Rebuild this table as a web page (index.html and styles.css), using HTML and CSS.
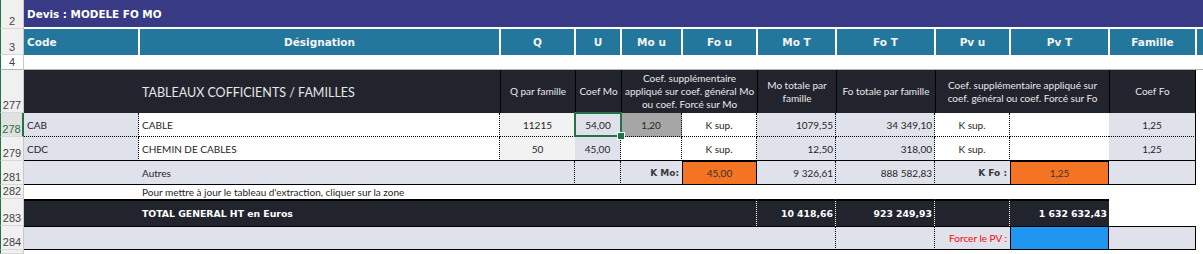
FILE: index.html
```html
<!DOCTYPE html>
<html lang="fr">
<head>
<meta charset="utf-8">
<title>Devis : MODELE FO MO</title>
<link rel="stylesheet" href="styles.css">
</head>
<body>
<div class="sheet">
  <!-- row 2 -->
  <div class="rh">2</div>
  <div class="title s12">Devis : MODELE FO MO</div>

  <!-- row 3 -->
  <div class="rh">3</div>
  <div class="th first left">Code</div>
  <div class="th">Désignation</div>
  <div class="th">Q</div>
  <div class="th">U</div>
  <div class="th">Mo u</div>
  <div class="th">Fo u</div>
  <div class="th">Mo T</div>
  <div class="th">Fo T</div>
  <div class="th">Pv u</div>
  <div class="th">Pv T</div>
  <div class="th">Famille</div>
  <div class="th last"></div>

  <!-- row 4 -->
  <div class="rh r4">4</div>
  <div class="c r4 s12"></div>

  <!-- row 277 -->
  <div class="rh">277</div>
  <div class="c dk"></div>
  <div class="c dk big">TABLEAUX COFFICIENTS / FAMILLES</div>
  <div class="c dk hd bl">Q par famille</div>
  <div class="c dk hd bl">Coef Mo</div>
  <div class="c dk hd bl s2">Coef. supplémentaire<br>appliqué sur coef. général Mo<br>ou coef. Forcé sur Mo</div>
  <div class="c dk hd bl">Mo totale par<br>famille</div>
  <div class="c dk hd bl">Fo totale par famille</div>
  <div class="c dk hd bl s2">Coef. supplémentaire appliqué sur<br>coef. général ou coef. Forcé sur Fo</div>
  <div class="c dk hd bl sr">Coef Fo</div>
  <div class="c"></div>

  <!-- row 278 -->
  <div class="rh sel">278</div>
  <div class="c lt dr db">CAB</div>
  <div class="c dr db">CABLE</div>
  <div class="c gr db ctr">11215</div>
  <div class="c lt db ctr active">54,00</div>
  <div class="c gy dr db ctr">1,20</div>
  <div class="c dr db ctr">K sup.</div>
  <div class="c lt dr db r">1079,55</div>
  <div class="c lt dr db r">34 349,10</div>
  <div class="c dr db ctr">K sup.</div>
  <div class="c db"></div>
  <div class="c lt db sr ctr">1,25</div>
  <div class="c"></div>

  <!-- row 279 -->
  <div class="rh">279</div>
  <div class="c lt dr sb">CDC</div>
  <div class="c dr sb">CHEMIN DE CABLES</div>
  <div class="c gr sb ctr">50</div>
  <div class="c lt dr sb ctr">45,00</div>
  <div class="c dr sb"></div>
  <div class="c dr sb ctr">K sup.</div>
  <div class="c lt dr sb r">12,50</div>
  <div class="c lt dr sb r">318,00</div>
  <div class="c dr sb ctr">K sup.</div>
  <div class="c sb"></div>
  <div class="c lt sb sr ctr">1,25</div>
  <div class="c"></div>

  <!-- row 281 -->
  <div class="rh">281</div>
  <div class="c lt sb"></div>
  <div class="c lt sb">Autres</div>
  <div class="c lt sb dr"></div>
  <div class="c lt sb dr"></div>
  <div class="c lt sb r b pr3">K Mo:</div>
  <div class="c box or ctr">45,00</div>
  <div class="c lt dr sb r">9 326,61</div>
  <div class="c lt dr sb r">888 582,83</div>
  <div class="c lt sb r b pr3">K Fo :</div>
  <div class="c box or ctr">1,25</div>
  <div class="c lt sb sr"></div>
  <div class="c"></div>

  <!-- row 282 -->
  <div class="rh">282</div>
  <div class="c"></div>
  <div class="c note s11">Pour mettre à jour le tableau d'extraction, cliquer sur la zone</div>

  <!-- row 283 -->
  <div class="rh">283</div>
  <div class="c dk tt"></div>
  <div class="c dk tt b tot">TOTAL GENERAL HT en Euros</div>
  <div class="c dk tt dw s4"></div>
  <div class="c dk tt dw r b tot">10 418,66</div>
  <div class="c dk tt dw r b tot">923 249,93</div>
  <div class="c dk tt dw"></div>
  <div class="c dk tt r b tot">1 632 632,43</div>
  <div class="c"></div>
  <div class="c"></div>

  <!-- row 284 -->
  <div class="rh">284</div>
  <div class="c lt st sb"></div>
  <div class="c lt st sb s5"></div>
  <div class="c lt st sb dr"></div>
  <div class="c lt st sb dr"></div>
  <div class="c lt st sb r red pr3">Forcer le PV :</div>
  <div class="c box bl-fill"></div>
  <div class="c lt st sb sr"></div>
  <div class="c"></div>

  <!-- rest -->
  <div class="rh"></div>
  <div class="c s12"></div>
</div>
</body>
</html>
```

FILE: styles.css
```css
* { box-sizing: border-box; }
html, body { margin: 0; padding: 0; background: #fff; }

.sheet {
  display: grid;
  grid-template-columns: 24px 115px 361px 75px 46px 61px 75px 79px 99px 75px 99px 87px 7px;
  grid-template-rows: 29px 26px 15px 43px 24px 24px 24px 14px 27px 24px 4px;
  width: 1203px;
  height: 254px;
  overflow: hidden;
  font-family: "Lato", "Liberation Sans", sans-serif;
  font-size: 10px;
  color: #262626;
}

.s2 { grid-column: span 2; }
.s4 { grid-column: span 4; }
.s5 { grid-column: span 5; }
.s11 { grid-column: span 11; }
.s12 { grid-column: span 12; }

/* row headers */
.rh {
  background: #f0f0f0;
  border-left: 1px solid #217346;
  border-right: 1px solid #c8c8c8;
  border-bottom: 1px solid #d8d8d8;
  display: flex;
  align-items: flex-end;
  justify-content: center;
  font-family: "Liberation Sans", sans-serif;
  font-size: 11px;
  color: #444;
  padding-bottom: 1px;
  line-height: 12px;
}
.rh.sel {
  background: #e1e1e1;
  color: #217346;
  border-right: 2px solid #217346;
}

/* title row */
.title {
  background: #383a86;
  border-bottom: 2px solid #fff;
  color: #fff;
  font-family: "DejaVu Sans", sans-serif;
  font-weight: bold;
  font-size: 10.4px;
  display: flex;
  align-items: center;
  padding-left: 3px;
}

/* column header row */
.th {
  background: #23769c;
  color: #f4f4f4;
  font-family: "DejaVu Sans", sans-serif;
  font-weight: bold;
  font-size: 10.5px;
  display: flex;
  align-items: center;
  justify-content: center;
  border-left: 1px solid #fff;
  border-right: 1px solid #fff;
  white-space: nowrap;
}
.th.first { border-left: 0; }
.th.left { justify-content: flex-start; padding-left: 3px; }
.th.last { border-right: 0; }

.r4 { border-bottom: 1px solid #b4b4b4; background: #fff; }

/* generic cell */
.c {
  display: flex;
  align-items: center;
  white-space: nowrap;
  padding: 0 2px 0 3px;
  background: #fff;
  min-width: 0;
}
.ctr { justify-content: center; padding: 0; }
.r { justify-content: flex-end; padding-right: 2px; }
.pr3 { padding-right: 3px; }

.lt { background: #dfe2eb; }
.gr { background: #f2f2f2; }
.gy { background: #a6a6a6; }
.dk { background: #21242d; color: #e8e8e8; }
.or { background: #f47423; color: #333; }
.bl-fill { background: #2196f0; }

.dr { border-right: 1px dotted #000; }
.db { border-bottom: 1px dotted #000; }
.sb { border-bottom: 1px solid #000; }
.st { border-top: 1px solid #000; }
.sr { border-right: 1px solid #000; }
.bl { border-left: 1px solid #000; }
.dw { border-right: 1px dotted #fff; }
.tt { border-top: 2px solid #000; }
.box { border: 1px solid #000; }

.hd {
  justify-content: center;
  text-align: center;
  line-height: 13px;
  padding: 0;
  font-size: 10px;
}
.big {
  font-size: 12.5px;
  color: #e6e6e6;
  padding-left: 3px;
  padding-top: 2px;
}
.b {
  font-family: "DejaVu Sans", sans-serif;
  font-weight: bold;
  font-size: 9px;
  color: #3a3a3a;
}
.tot { color: #fff; font-size: 9.3px; }
.note { font-size: 10px; padding-left: 3px; overflow: visible; }
.red { color: #ff0000; }

.active { position: relative; }
.active::before {
  content: "";
  position: absolute;
  left: -1px; top: -1px; right: -1px; bottom: -1px;
  border: 2px solid #217346;
}
.active::after {
  content: "";
  position: absolute;
  right: -4px; bottom: -4px;
  width: 6px; height: 6px;
  background: #217346;
  border: 1px solid #fff;
}
```
